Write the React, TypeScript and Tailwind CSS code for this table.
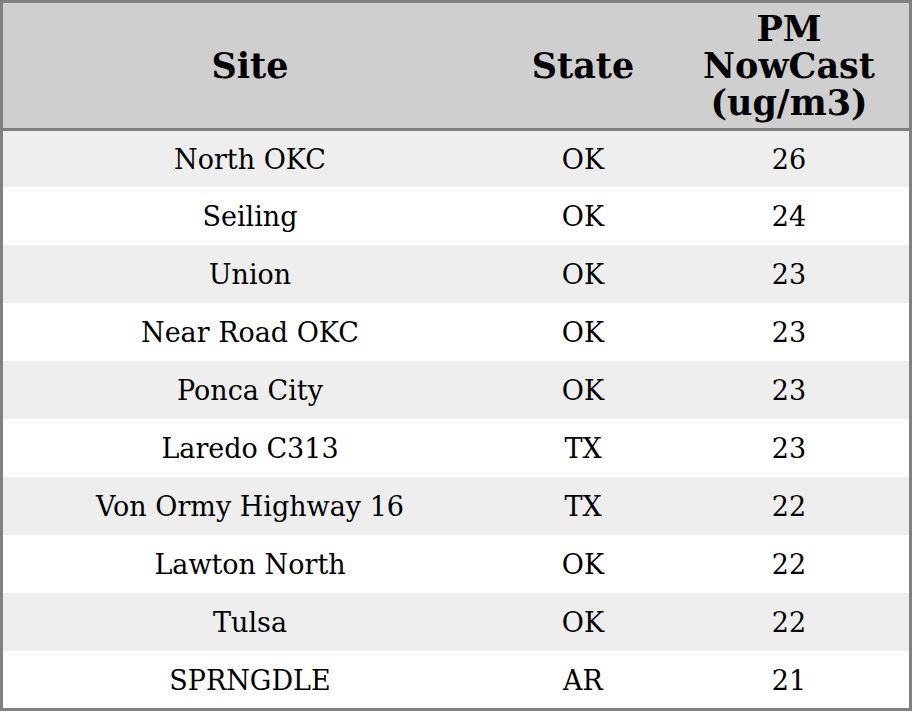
import React from "react";

const rows: [string, string, string][] = [
  ["North OKC", "OK", "26"],
  ["Seiling", "OK", "24"],
  ["Union", "OK", "23"],
  ["Near Road OKC", "OK", "23"],
  ["Ponca City", "OK", "23"],
  ["Laredo C313", "TX", "23"],
  ["Von Ormy Highway 16", "TX", "22"],
  ["Lawton North", "OK", "22"],
  ["Tulsa", "OK", "22"],
  ["SPRNGDLE", "AR", "21"],
];

export default function App() {
  return (
    <div
      className="w-[912px] h-[711px] border-[3px] border-[#808080] bg-white text-black flex flex-col"
      style={{ fontFamily: '"DejaVu Serif", serif' }}
    >
      <div className="grid grid-cols-[494px_172px_240px] h-[125px] bg-[#cfcfcf] border-b-[3px] border-[#808080] box-content font-bold text-[35px] leading-[37px]">
        <div className="flex items-center justify-center text-center">Site</div>
        <div className="flex items-center justify-center text-center">State</div>
        <div className="flex items-center justify-center text-center">
          PM
          <br />
          NowCast
          <br />
          (ug/m3)
        </div>
      </div>
      {rows.map((r, i) => {
        const h = i === 0 ? "h-[56px]" : i === rows.length - 1 ? "h-[57px]" : "h-[58px]";
        const bg = i % 2 === 0 ? "bg-[#eeeeee]" : "bg-white";
        return (
          <div key={i} className={`grid grid-cols-[494px_172px_240px] ${h} ${bg} text-[27px] leading-[32px] pt-[2px]`}>
            <div className="flex items-center justify-center">{r[0]}</div>
            <div className="flex items-center justify-center">{r[1]}</div>
            <div className="flex items-center justify-center">{r[2]}</div>
          </div>
        );
      })}
    </div>
  );
}
